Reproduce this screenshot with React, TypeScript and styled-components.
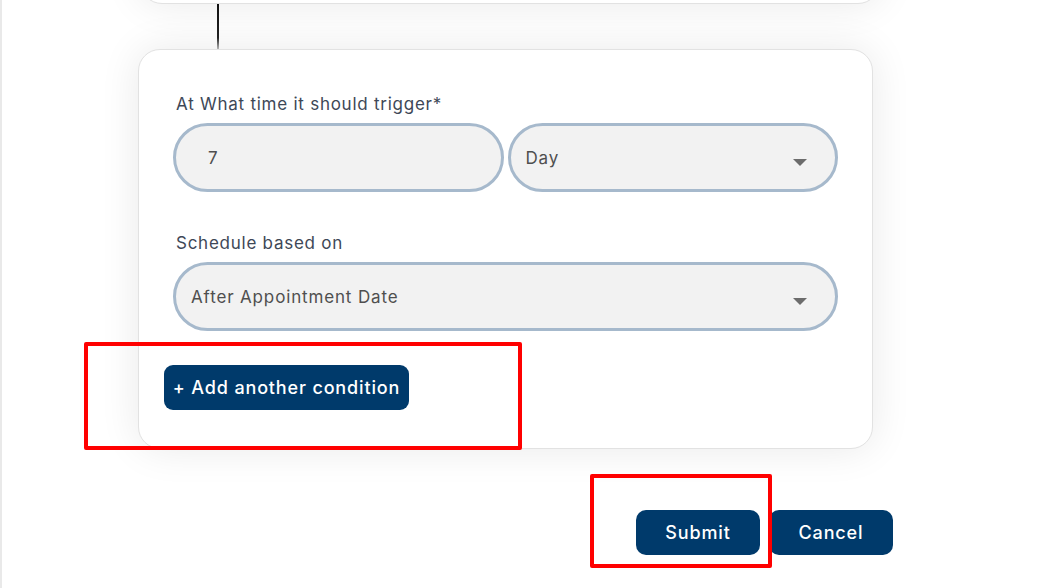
import styled, { createGlobalStyle } from 'styled-components';

const COLORS = {
  navy: '#003a6b',
  label: '#3e4857',
  field: '#f2f2f2',
  fieldBorder: '#a6b9cc',
  fieldText: '#4f4f4f',
  arrow: '#6c6c6c',
  mark: '#ff0000',
};

const GlobalStyle = createGlobalStyle`
  html, body {
    margin: 0;
    padding: 0;
    background: #ffffff;
    font-family: Inter, "Open Sans", "Liberation Sans", sans-serif;
  }
  * { box-sizing: border-box; }
`;

type SelectProps = { value: string };

function SelectField({ value }: SelectProps) {
  return (
    <Field $select>
      <FieldText>{value}</FieldText>
      <Arrow />
    </Field>
  );
}

export default function App() {
  return (
    <>
      <GlobalStyle />
      <Page>
        <Column>
          <PrevCard />
          <Connector />
          <Card>
            <Group>
              <Label>At What time it should trigger*</Label>
              <Row>
                <Field>
                  <FieldText>7</FieldText>
                </Field>
                <SelectField value='Day' />
              </Row>
            </Group>
            <Group>
              <Label>Schedule based on</Label>
              <SelectField value='After Appointment Date' />
            </Group>
            <AddButton>+ Add another condition</AddButton>
          </Card>
          <Actions>
            <ActionButton>Submit</ActionButton>
            <ActionButton>Cancel</ActionButton>
          </Actions>
        </Column>
        <Highlight $x={82} $y={342} $w={438} $h={108} />
        <Highlight $x={588} $y={474} $w={182} $h={94} />
      </Page>
    </>
  );
}

const Page = styled.div`
  position: relative;
  min-height: 588px;
  border-left: 2px solid #e9e9e9;
  padding-left: 136px;
  overflow: hidden;
`;

const Column = styled.div`
  width: 755px;
  display: flex;
  flex-direction: column;
`;

const PrevCard = styled.div`
  width: 740px;
  height: 80px;
  margin-top: -76px;
  margin-left: 2px;
  background: #fff;
  border: 1px solid #e2e2e2;
  border-radius: 22px;
  box-shadow: 0 0 40px rgba(0, 0, 0, 0.09);
`;

const Connector = styled.div`
  width: 2px;
  height: 45px;
  margin-left: 79px;
  background: linear-gradient(#111 0%, #222 75%, #bbb 100%);
`;

const Card = styled.div`
  width: 735px;
  height: 400px;
  background: #fff;
  border: 1px solid #e2e2e2;
  border-radius: 22px;
  box-shadow: 0 0 40px rgba(0, 0, 0, 0.09);
  padding: 44px 34px 0 34px;
  display: flex;
  flex-direction: column;
`;

const Group = styled.div`
  display: flex;
  flex-direction: column;
  gap: 8px;
  margin-bottom: 41px;

  & + & {
    margin-bottom: 34px;
  }
`;

const Label = styled.div`
  font-size: 17px;
  line-height: 21px;
  letter-spacing: 0.75px;
  padding-left: 3px;
  color: ${COLORS.label};
`;

const Row = styled.div`
  display: grid;
  grid-template-columns: 1fr 1fr;
  gap: 4px;
`;

const Field = styled.div<{ $select?: boolean }>`
  height: 69px;
  min-width: 0;
  border: 3px solid ${COLORS.fieldBorder};
  border-radius: 35px;
  background: ${COLORS.field};
  display: flex;
  align-items: center;
  padding-left: ${(p) => (p.$select ? '15px' : '32px')};
  padding-right: 28px;
`;

const FieldText = styled.span`
  flex: 1;
  font-size: 17px;
  letter-spacing: 0.85px;
  color: ${COLORS.fieldText};
  padding-top: 1px;
`;

const Arrow = styled.span`
  width: 0;
  height: 0;
  margin-top: 9px;
  border-left: 7px solid transparent;
  border-right: 7px solid transparent;
  border-top: 7px solid ${COLORS.arrow};
`;

const AddButton = styled.button`
  align-self: flex-start;
  margin-left: -9px;
  height: 45px;
  width: 245px;
  border: none;
  border-radius: 9px;
  background: ${COLORS.navy};
  color: #fff;
  font-family: inherit;
  font-size: 18px;
  font-weight: 500;
  letter-spacing: 0.85px;
  padding: 0;
`;

const Actions = styled.div`
  display: flex;
  justify-content: flex-end;
  gap: 9px;
  margin-top: 61px;
`;

const ActionButton = styled.button`
  width: 124px;
  height: 45px;
  border: none;
  border-radius: 10px;
  background: ${COLORS.navy};
  color: #fff;
  font-family: inherit;
  font-size: 18px;
  font-weight: 500;
  letter-spacing: 0.85px;
  padding: 0;
`;

const Highlight = styled.div<{ $x: number; $y: number; $w: number; $h: number }>`
  position: absolute;
  left: ${(p) => p.$x}px;
  top: ${(p) => p.$y}px;
  width: ${(p) => p.$w}px;
  height: ${(p) => p.$h}px;
  border: 4px solid ${COLORS.mark};
  border-radius: 2px;
  pointer-events: none;
`;
